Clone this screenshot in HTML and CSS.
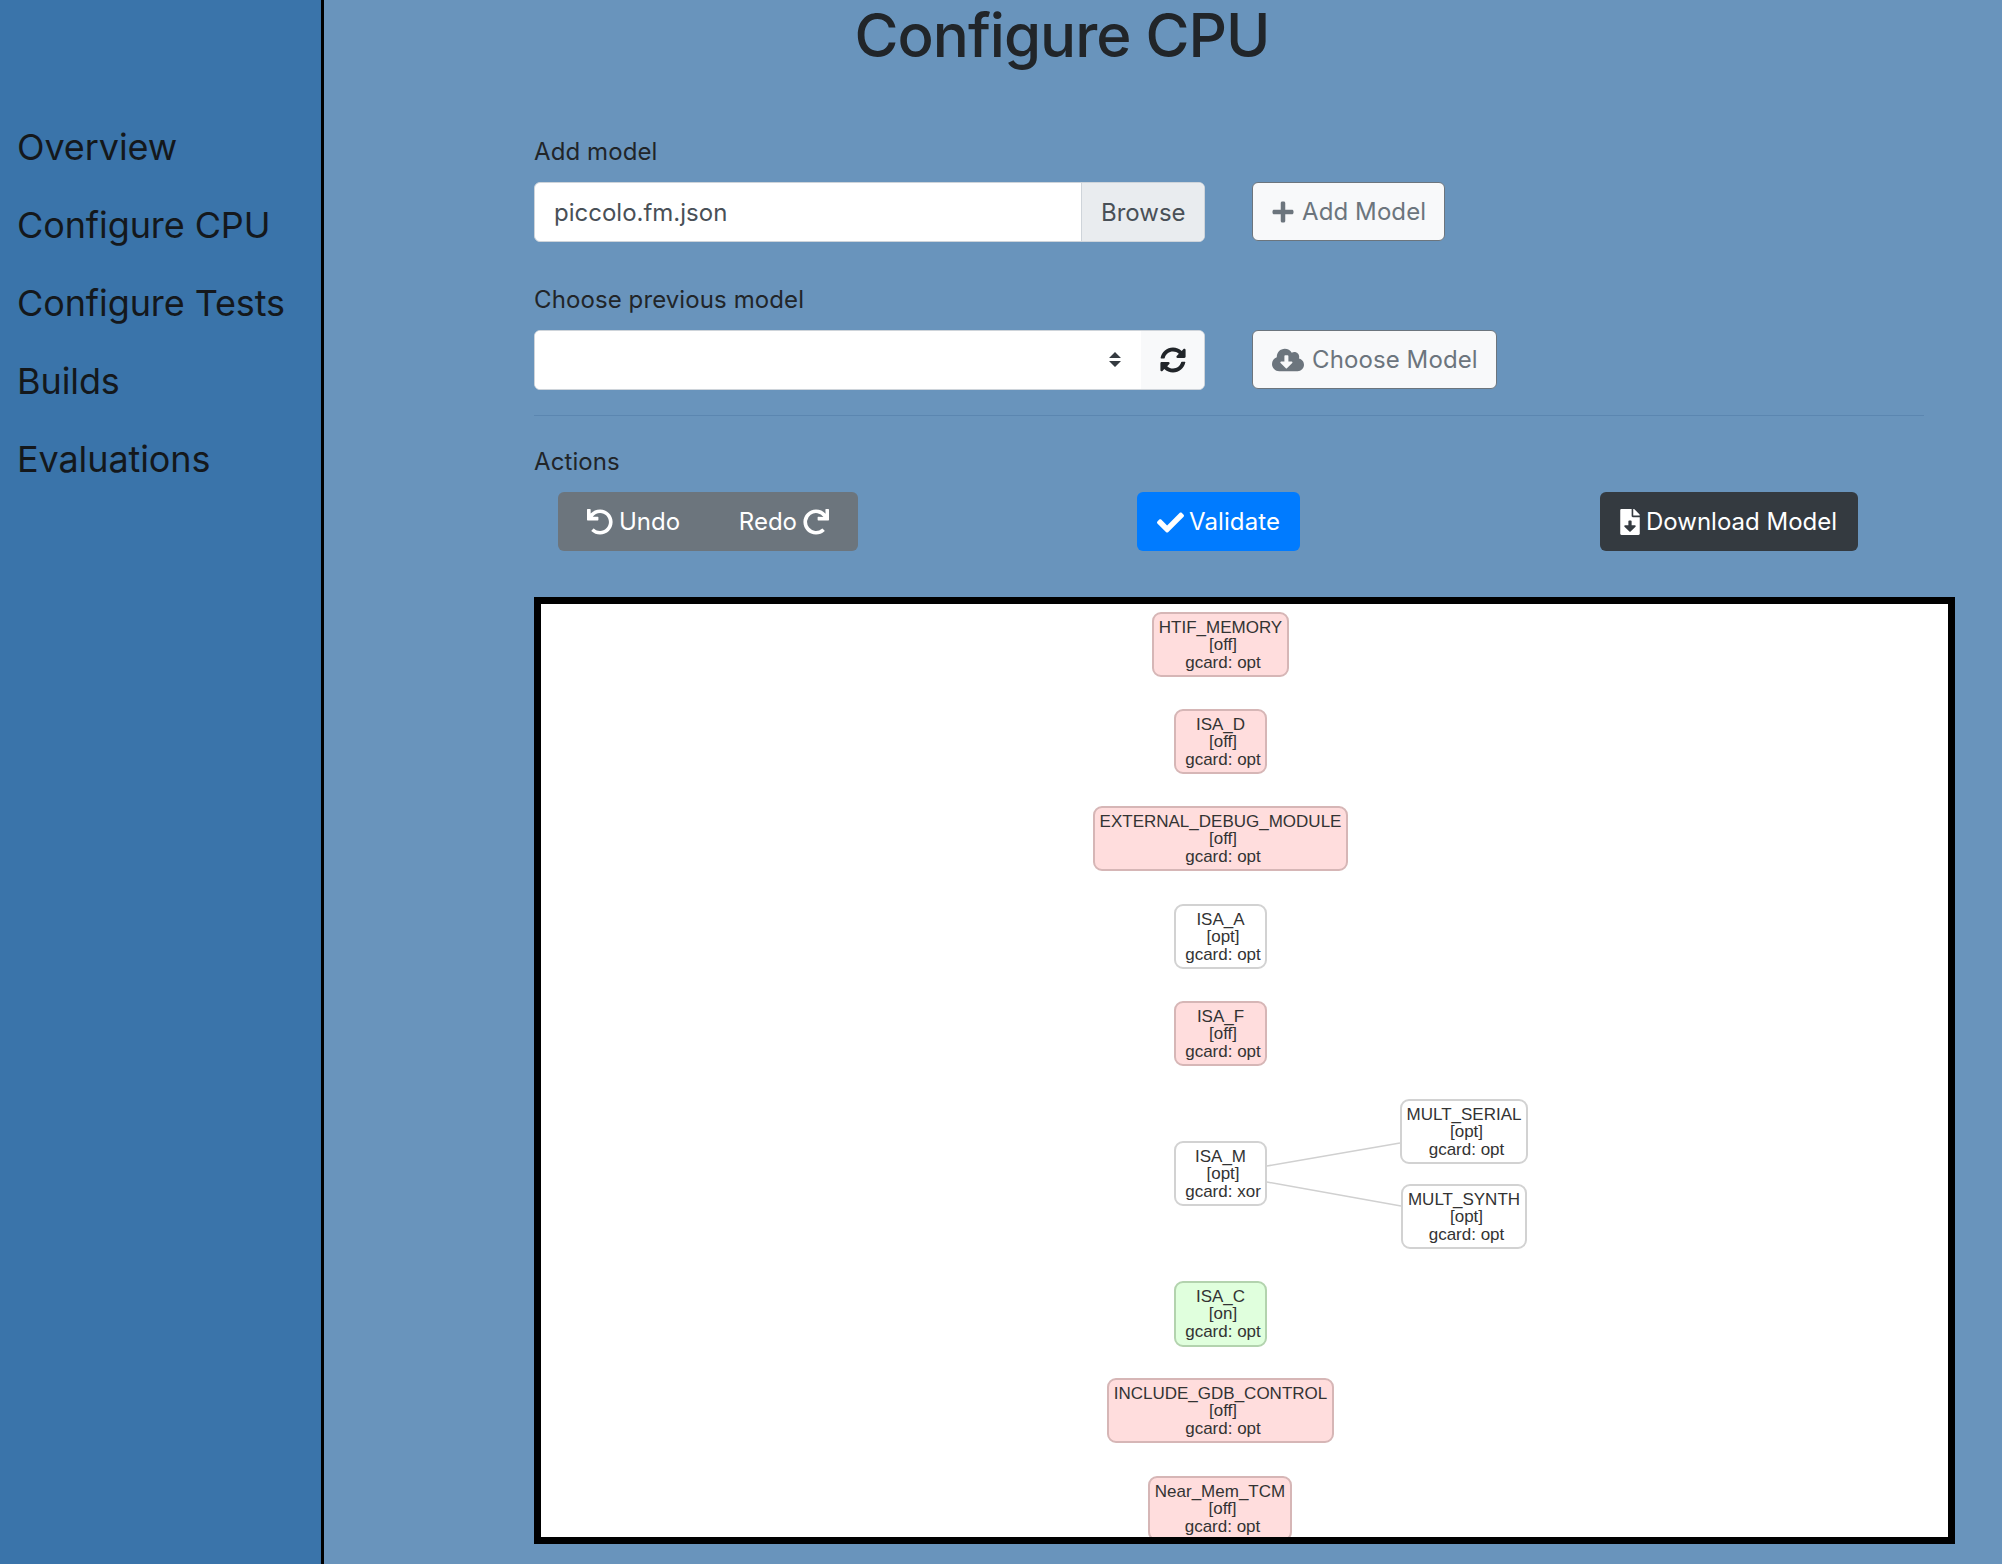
FILE: index.html
```html
<!DOCTYPE html>
<html lang="en">
<head>
    <meta charset="UTF-8">
    <meta name="viewport" content="width=device-width, initial-scale=1.0">
    <title>Configure CPU</title>
    <link rel="stylesheet" href="styles.css">
</head>
<body>
    <nav class="sidebar">
        <a class="nav-link">Overview</a>
        <a class="nav-link">Configure CPU</a>
        <a class="nav-link">Configure Tests</a>
        <a class="nav-link">Builds</a>
        <a class="nav-link">Evaluations</a>
    </nav>

    <main class="content">
        <h1 class="title">Configure CPU</h1>

        <label class="field-label">Add model</label>
        <div class="form-row">
            <div class="input-group">
                <div class="file-name">piccolo.fm.json</div>
                <div class="browse">Browse</div>
            </div>
            <button class="btn btn-light btn-add">
                <svg class="icon icon-plus" viewBox="0 0 448 512"><path d="M416 208H272V64c0-17.67-14.33-32-32-32h-32c-17.67 0-32 14.33-32 32v144H32c-17.67 0-32 14.33-32 32v32c0 17.67 14.33 32 32 32h144v144c0 17.67 14.33 32 32 32h32c17.67 0 32-14.33 32-32V304h144c17.67 0 32-14.33 32-32v-32c0-17.67-14.33-32-32-32z"/></svg>
                Add Model
            </button>
        </div>

        <label class="field-label label-second">Choose previous model</label>
        <div class="form-row">
            <div class="input-group">
                <div class="select">
                    <svg class="select-arrows" viewBox="0 0 4 5"><path d="M2 0L0 2h4zm0 5L0 3h4z"/></svg>
                </div>
                <div class="refresh">
                    <svg class="icon icon-sync" viewBox="0 0 512 512"><path d="M370.72 133.28C339.458 104.008 298.888 87.962 255.848 88c-77.458.068-144.328 53.178-162.791 126.85-1.344 5.363-6.122 9.15-11.651 9.15H24.103c-7.498 0-13.194-6.807-11.807-14.176C33.933 94.924 134.813 8 256 8c66.448 0 126.791 26.136 171.315 68.685L463.03 40.97C478.149 25.851 504 36.559 504 57.941V192c0 13.255-10.745 24-24 24H345.941c-21.382 0-32.09-25.851-16.971-40.971l41.75-41.749zM32 296h134.059c21.382 0 32.09 25.851 16.971 40.971l-41.75 41.75c31.262 29.273 71.835 45.319 114.876 45.28 77.418-.07 144.315-53.144 162.787-126.849 1.344-5.363 6.122-9.15 11.651-9.15h57.304c7.498 0 13.194 6.807 11.807 14.176C478.067 417.076 377.187 504 256 504c-66.448 0-126.791-26.136-171.315-68.685L48.97 471.03C33.851 486.149 8 475.441 8 454.059V320c0-13.255 10.745-24 24-24z"/></svg>
                </div>
            </div>
            <button class="btn btn-light btn-choose">
                <svg class="icon icon-cloud" viewBox="0 0 640 512"><path d="M537.6 226.6c4.1-10.7 6.4-22.4 6.4-34.6 0-53-43-96-96-96-19.7 0-38.1 6-53.3 16.2C367 64.2 315.3 32 256 32c-88.4 0-160 71.6-160 160 0 2.7.1 5.4.2 8.1C40.2 219.8 0 273.2 0 336c0 79.5 64.5 144 144 144h368c70.7 0 128-57.3 128-128 0-61.9-44-113.6-102.4-125.4zm-132.9 88.7L299.3 420.7c-6.2 6.2-16.4 6.2-22.6 0L171.3 315.3c-10.1-10.1-2.9-27.3 11.3-27.3H248V176c0-8.8 7.2-16 16-16h48c8.8 0 16 7.2 16 16v112h65.4c14.2 0 21.4 17.2 11.3 27.3z"/></svg>
                Choose Model
            </button>
        </div>

        <hr class="divider">

        <label class="field-label">Actions</label>
        <div class="actions">
            <div class="btn-group">
                <button class="btn btn-grey btn-undo">
                    <svg class="icon icon-undo" viewBox="0 0 512 512"><path d="M212.333 224.333H12c-6.627 0-12-5.373-12-12V12C0 5.373 5.373 0 12 0h48c6.627 0 12 5.373 12 12v78.112C117.773 39.279 184.26 7.47 258.175 8.007c136.906.994 246.448 111.623 246.157 248.532C504.041 393.258 393.12 504 256.333 504c-64.089 0-122.496-24.313-166.51-64.215-5.099-4.622-5.334-12.554-.467-17.42l33.967-33.967c4.474-4.474 11.662-4.717 16.401-.525C170.76 415.336 211.58 432 256.333 432c97.268 0 176-78.716 176-176 0-97.267-78.716-176-176-176-58.496 0-110.28 28.476-142.274 72.333h98.274c6.627 0 12 5.373 12 12v48c0 6.627-5.373 12-12 12z"/></svg>
                    Undo
                </button>
                <button class="btn btn-grey btn-redo">
                    Redo
                    <svg class="icon icon-undo" viewBox="0 0 512 512"><path d="M500.33 0h-47.41a12 12 0 0 0-12 12.57l4 82.76A247.42 247.42 0 0 0 256 8C119.34 8 7.9 119.53 8 256.19 8.1 393.07 119.1 504 256 504a247.1 247.1 0 0 0 166.18-63.91 12 12 0 0 0 .48-17.43l-34-34a12 12 0 0 0-16.38-.55A176 176 0 1 1 402.1 157.8l-101.53-4.87a12 12 0 0 0-12.57 12v47.41a12 12 0 0 0 12 12h200.33a12 12 0 0 0 12-12V12a12 12 0 0 0-12-12z"/></svg>
                </button>
            </div>
            <button class="btn btn-blue">
                <svg class="icon icon-check" viewBox="0 0 512 512"><path d="M173.898 439.404l-166.4-166.4c-9.997-9.997-9.997-26.206 0-36.204l36.203-36.204c9.997-10.001 26.207-10.001 36.204 0L192 312.69 432.095 72.596c9.997-9.997 26.207-9.997 36.204 0l36.203 36.204c9.997 9.997 9.997 26.206 0 36.204l-294.4 294.401c-9.998 9.997-26.207 9.997-36.204-.001z"/></svg>
                Validate
            </button>
            <button class="btn btn-dark">
                <svg class="icon icon-file" viewBox="0 0 384 512"><path d="M224 136V0H24C10.7 0 0 10.7 0 24v464c0 13.3 10.7 24 24 24h336c13.3 0 24-10.7 24-24V160H248c-13.2 0-24-10.8-24-24zm76.45 211.36l-96.42 95.7c-6.65 6.61-17.39 6.61-24.04 0l-96.42-95.7C73.42 337.29 80.54 320 94.82 320H160v-80c0-8.84 7.16-16 16-16h32c8.84 0 16 7.16 16 16v80h65.18c14.28 0 21.4 17.29 11.27 27.36zM377 105L279.1 7c-4.5-4.5-10.6-7-17-7H256v128h128v-6.1c0-6.3-2.5-12.4-7-16.9z"/></svg>
                Download Model
            </button>
        </div>

        <div class="graph">
            <svg class="edges" width="1407" height="933">
                <line x1="726" y1="562" x2="859" y2="539"/>
                <line x1="726" y1="578" x2="860" y2="602"/>
            </svg>
            <div class="node off n-htif"><div>HTIF_MEMORY</div><div class="sub">[off]</div><div class="sub">gcard: opt</div></div>
            <div class="node off n-isa-d"><div>ISA_D</div><div class="sub">[off]</div><div class="sub">gcard: opt</div></div>
            <div class="node off n-debug"><div>EXTERNAL_DEBUG_MODULE</div><div class="sub">[off]</div><div class="sub">gcard: opt</div></div>
            <div class="node n-isa-a"><div>ISA_A</div><div class="sub">[opt]</div><div class="sub">gcard: opt</div></div>
            <div class="node off n-isa-f"><div>ISA_F</div><div class="sub">[off]</div><div class="sub">gcard: opt</div></div>
            <div class="node n-isa-m"><div>ISA_M</div><div class="sub">[opt]</div><div class="sub">gcard: xor</div></div>
            <div class="node n-serial"><div>MULT_SERIAL</div><div class="sub">[opt]</div><div class="sub">gcard: opt</div></div>
            <div class="node n-synth"><div>MULT_SYNTH</div><div class="sub">[opt]</div><div class="sub">gcard: opt</div></div>
            <div class="node on n-isa-c"><div>ISA_C</div><div class="sub">[on]</div><div class="sub">gcard: opt</div></div>
            <div class="node off n-gdb"><div>INCLUDE_GDB_CONTROL</div><div class="sub">[off]</div><div class="sub">gcard: opt</div></div>
            <div class="node off n-tcm"><div>Near_Mem_TCM</div><div class="sub">[off]</div><div class="sub">gcard: opt</div></div>
        </div>
    </main>
</body>
</html>
```

FILE: styles.css
```css
body {
    font-family: Inter, "Noto Sans", sans-serif;
    font-size: 24px;
    line-height: 36px;
    color: #212529;
    margin: 0;
    display: flex;
    height: 1564px;
    overflow: hidden;
}

/* sidebar */
.sidebar {
    box-sizing: border-box;
    width: 324px;
    flex-shrink: 0;
    padding: 108px 0 0 17px;
    background-color: #3a74aa;
    border-right: 3px solid #000;
    display: flex;
    flex-direction: column;
}
.nav-link {
    font-size: 36px;
    line-height: 54px;
    padding: 12px 0;
    height: 54px;
    letter-spacing: -0.1px;
    color: #14181c;
}

/* main column */
.content {
    flex: 1;
    padding-left: 210px;
    background-color: #6994bc;
}
.title {
    width: 1054px;
    margin: 0 0 64px -209px;
    padding-left: 210px;
    font-size: 60px;
    line-height: 70px;
    font-weight: 500;
    text-align: center;
    letter-spacing: -1px;
}
.field-label {
    display: block;
    height: 36px;
    margin-bottom: 12px;
    letter-spacing: 0.1px;
}
.label-second {
    margin-top: 40px;
}
.form-row {
    display: flex;
    align-items: flex-start;
    gap: 47px;
}
.input-group {
    box-sizing: border-box;
    width: 671px;
    height: 60px;
    display: flex;
    border: 1px solid #ced4da;
    border-radius: 6px;
    overflow: hidden;
    background: #fff;
    color: #495057;
}
.file-name {
    flex: 1;
    padding: 12px 19px 0;
}
.browse {
    width: 123px;
    box-sizing: border-box;
    padding: 12px 19px 0;
    background: #e9ecef;
    border-left: 1px solid #ced4da;
}
.select {
    flex: 1;
    position: relative;
    background: #fff;
}
.select-arrows {
    position: absolute;
    right: 20px;
    top: 21px;
    width: 12px;
    height: 15px;
    fill: #343a40;
}
.refresh {
    width: 63px;
    background: #f8f9fa;
    display: flex;
    align-items: center;
    justify-content: center;
    margin: -1px 0;
}
.divider {
    width: 1390px;
    margin: 25px 0 28px;
    border: 0;
    border-top: 1px solid #5b86b0;
}

/* buttons */
.btn {
    box-sizing: border-box;
    height: 59px;
    padding: 1px 19px 0;
    display: inline-flex;
    align-items: center;
    gap: 6px;
    font: inherit;
    border: 1px solid transparent;
    border-radius: 6px;
    white-space: nowrap;
}
.btn-light {
    background: #f8f9fa;
    color: #6c757d;
    border-color: #6c757d;
    gap: 8px;
    letter-spacing: 0.1px;
}
.btn-add {
    width: 193px;
}
.btn-choose {
    width: 245px;
}
.btn-grey {
    background: #6c757d;
    color: #fff;
    padding: 1px 28px 0;
    border-radius: 0;
}
.btn-undo {
    width: 151px;
    border-radius: 6px 0 0 6px;
}
.btn-redo {
    width: 149px;
    justify-content: flex-end;
    border-radius: 0 6px 6px 0;
}
.btn-blue {
    width: 163px;
    background: #007bff;
    color: #fff;
    margin-left: 279px;
    gap: 5px;
    letter-spacing: 0.1px;
}
.btn-dark {
    width: 258px;
    background: #343a40;
    color: #fff;
    margin-left: 300px;
}
.icon {
    fill: currentColor;
    flex-shrink: 0;
}
.icon-plus { width: 22px; height: 24px; }
.icon-sync { width: 26px; height: 26px; color: #212529; }
.icon-cloud { width: 32px; height: 26px; }
.icon-undo { width: 26px; height: 26px; }
.icon-check { width: 27px; height: 27px; }
.icon-file { width: 20px; height: 26px; }

.actions {
    display: flex;
    padding-left: 24px;
    margin-bottom: 46px;
}
.btn-group {
    display: flex;
}

/* feature model diagram */
.graph {
    box-sizing: border-box;
    position: relative;
    width: 1421px;
    height: 947px;
    border: 7px solid #000;
    background: #fff;
    overflow: hidden;
}
.edges {
    position: absolute;
    left: 0;
    top: 0;
}
.edges line {
    stroke: #d0d0d0;
    stroke-width: 1.5;
}
.node {
    box-sizing: border-box;
    position: absolute;
    height: 65px;
    padding-top: 5px;
    border: 2px solid #d2d2d2;
    border-radius: 9px;
    background: #fff;
    font-family: "Liberation Sans", Arial, sans-serif;
    font-size: 17px;
    line-height: 17.4px;
    color: #333;
    text-align: center;
    white-space: nowrap;
}
.node .sub {
    padding-left: 5px;
}
.node.off {
    background: #ffdddd;
    border-color: #d6b6b6;
}
.node.on {
    background: #e0ffdd;
    border-color: #b3d3ae;
}
.n-htif { left: 611px; top: 8px; width: 137px; }
.n-isa-d { left: 633px; top: 105px; width: 93px; }
.n-debug { left: 552px; top: 202px; width: 255px; }
.n-isa-a { left: 633px; top: 300px; width: 93px; }
.n-isa-f { left: 633px; top: 397px; width: 93px; }
.n-isa-m { left: 633px; top: 537px; width: 93px; }
.n-serial { left: 859px; top: 495px; width: 128px; }
.n-synth { left: 860px; top: 580px; width: 126px; }
.n-isa-c { left: 633px; top: 677px; width: 93px; height: 66px; }
.n-gdb { left: 566px; top: 774px; width: 227px; }
.n-tcm { left: 607px; top: 872px; width: 144px; }
```
